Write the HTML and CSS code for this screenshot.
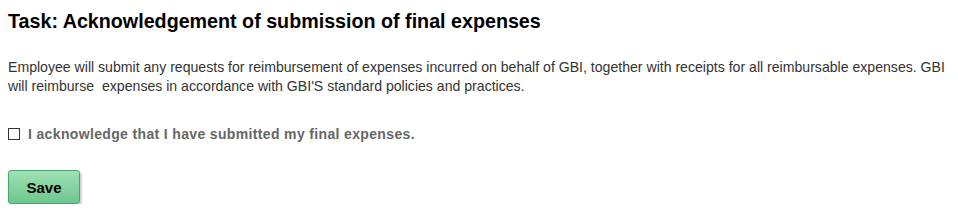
FILE: index.html
```html
<!DOCTYPE html>
<html>
<head>
  <title>Task</title>
  <meta charset="UTF-8">
  <link rel="stylesheet" href="styles.css">
</head>
<body>
  <div class="task">
    <h2 class="task-title">Task: Acknowledgement of submission of final expenses</h2>
    <p class="task-text">Employee will submit any requests for reimbursement of expenses incurred on behalf of GBI, together with receipts for all reimbursable expenses. GBI will reimburse&nbsp; expenses in accordance with GBI'S standard policies and practices.</p>
    <div class="ack">
      <input type="checkbox" id="ack" class="ack-box">
      <label for="ack" class="ack-label">I acknowledge that I have submitted my final expenses.</label>
    </div>
    <button type="button" class="btn-save">Save</button>
  </div>
</body>
</html>
```

FILE: styles.css
```css
body {
  margin: 0;
  padding: 0 8px;
  font-family: Arial, 'Liberation Sans', sans-serif;
  background: #fff;
}
.task-title {
  margin: 0;
  padding-top: 10px;
  font-size: 19.7px;
  font-weight: bold;
  color: #000;
  line-height: 22px;
}
.task-text {
  margin: 26px 0 0;
  font-size: 14.1px;
  line-height: 19px;
  color: #333;
}
.ack {
  display: flex;
  align-items: center;
  margin-top: 30px;
}
.ack-box {
  appearance: none;
  width: 12px;
  height: 12px;
  margin: 0 8px 0 0;
  border: 1px solid #333;
  background: #fff;
}
.ack-label {
  font-size: 14px;
  font-weight: bold;
  letter-spacing: 0.35px;
  color: #666;
}
.btn-save {
  display: block;
  margin-top: 28px;
  width: 72px;
  height: 34px;
  font-family: Arial, 'Liberation Sans', sans-serif;
  font-size: 15px;
  font-weight: bold;
  color: #000;
  background: linear-gradient(#9fe0b4, #6dc78f);
  border: 1px solid #4ea36d;
  border-radius: 3px;
  box-shadow: 1px 2px 3px rgba(0,0,0,0.3);
  cursor: pointer;
}
```
